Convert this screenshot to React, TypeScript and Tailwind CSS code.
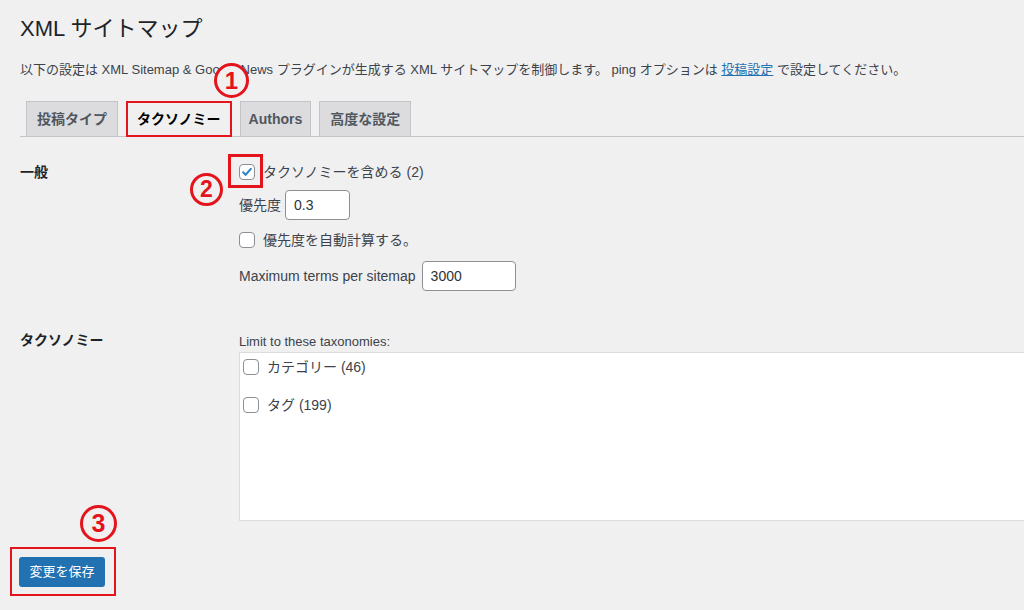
import React from 'react';

const font = "font-['Liberation_Sans','Noto_Sans_CJK_JP',sans-serif]";

function Badge({ n, className }: { n: string; className: string }) {
  // red numbered annotation circle drawn over the screenshot
  return (
    <div
      className={`absolute flex items-center justify-center rounded-full border-[3px] border-[#e3141b] bg-[#f0f0f1] font-bold text-[#e3141b] leading-none ${className}`}
    >
      {n}
    </div>
  );
}

function Checkbox({ checked = false }: { checked?: boolean }) {
  return (
    <span className="flex h-4 w-4 shrink-0 items-center justify-center rounded-[4px] border border-[#8c8f94] bg-white">
      {checked && (
        <svg viewBox="0 0 20 20" className="h-[16px] w-[16px]">
          <path d="M4.5 10.5l3.5 3.5 7.5-8.5" fill="none" stroke="#3582c4" strokeWidth="3" strokeLinecap="round" strokeLinejoin="round" />
        </svg>
      )}
    </span>
  );
}

const tabs = ['投稿タイプ', 'タクソノミー', 'Authors', '高度な設定'];

export default function App() {
  return (
    <div className={`relative h-[610px] w-[1024px] overflow-hidden bg-[#f0f0f1] pl-5 pt-[14px] text-[#3c434a] ${font}`}>
      <h1 className="text-[22px] leading-[30px] font-normal text-[#1d2327]">XML サイトマップ</h1>
      <p className="mt-4 text-[13px] leading-5">
        以下の設定は XML Sitemap &amp; Google News プラグインが生成する XML サイトマップを制御します。 ping オプションは{' '}
        <a className="text-[#2271b1] underline">投稿設定</a> で設定してください。
      </p>

      <div className="mt-[21px] flex items-end gap-2 border-b border-[#c3c4c7] pl-[6px]">
        {tabs.map((t, i) =>
          i === 1 ? (
            <div
              key={t}
              className="-mb-px flex h-[36px] items-center border-2 border-[#e3141b] bg-[#f0f0f1] px-[9px] text-[14px] font-semibold text-black"
            >
              {t}
            </div>
          ) : (
            <div
              key={t}
              className={`-mb-px flex h-[36px] items-center border border-[#c3c4c7] bg-[#dcdcde] text-[14px] font-semibold text-[#50575e] ${
                t === 'Authors' ? 'px-[8px]' : 'px-[10px]'
              }`}
            >
              {t}
            </div>
          )
        )}
      </div>

      {/* 一般 */}
      <div className="mt-[23px] flex text-[14px]">
        <div className="w-[219px] shrink-0 leading-6 font-semibold text-[#1d2327]">一般</div>
        <div className="flex flex-col">
          <label className="flex h-6 items-center gap-2">
            <span className="relative">
              <Checkbox checked />
              <span className="absolute -left-[11px] -top-[10px] h-[34px] w-[35px] border-[3px] border-[#e3141b]" />
            </span>
            タクソノミーを含める (2)
          </label>
          <div className="mt-[6px] flex h-[30px] items-center gap-[4px]">
            優先度
            <span className="flex h-[30px] w-[65px] items-center rounded-[4px] border border-[#8c8f94] bg-white px-2 text-[#2c3338]">0.3</span>
          </div>
          <label className="mt-2 flex h-6 items-center gap-2">
            <Checkbox />
            優先度を自動計算する。
          </label>
          <div className="mt-[9px] flex h-[30px] items-center gap-[6px]">
            Maximum terms per sitemap
            <span className="flex h-[30px] w-[94px] items-center rounded-[4px] border border-[#8c8f94] bg-white px-2 text-[#2c3338]">3000</span>
          </div>
        </div>
      </div>

      {/* タクソノミー */}
      <div className="mt-[41px] flex text-[14px]">
        <div className="w-[219px] shrink-0 leading-5 font-semibold text-[#1d2327]">
          <div className="-mt-[2px]">タクソノミー</div>
        </div>
        <div className="flex flex-col">
          <div className="text-[13px] leading-5">Limit to these taxonomies:</div>
          <div className="h-[169px] w-[820px] border border-[#dcdcde] bg-white pl-[3px] pt-[2px]">
            <label className="flex h-6 items-center gap-2">
              <Checkbox />
              カテゴリー (46)
            </label>
            <label className="mt-[14px] flex h-6 items-center gap-2">
              <Checkbox />
              タグ (199)
            </label>
          </div>
        </div>
      </div>

      <div className="-ml-[10px] mt-[26px] inline-block border-2 border-[#e3141b] pb-[7px] pl-[7px] pr-[9px] pt-[8px]">
        <button className="h-[30px] w-[86px] rounded-[3px] bg-[#2271b1] text-[13px] text-white">変更を保存</button>
      </div>

      <Badge n="1" className="left-[214px] top-[63px] h-[35px] w-[35px] text-[24px]" />
      <Badge n="2" className="left-[190px] top-[173px] h-[33px] w-[33px] text-[23px]" />
      <Badge n="3" className="left-[80px] top-[505px] h-[37px] w-[37px] text-[25px]" />
    </div>
  );
}
